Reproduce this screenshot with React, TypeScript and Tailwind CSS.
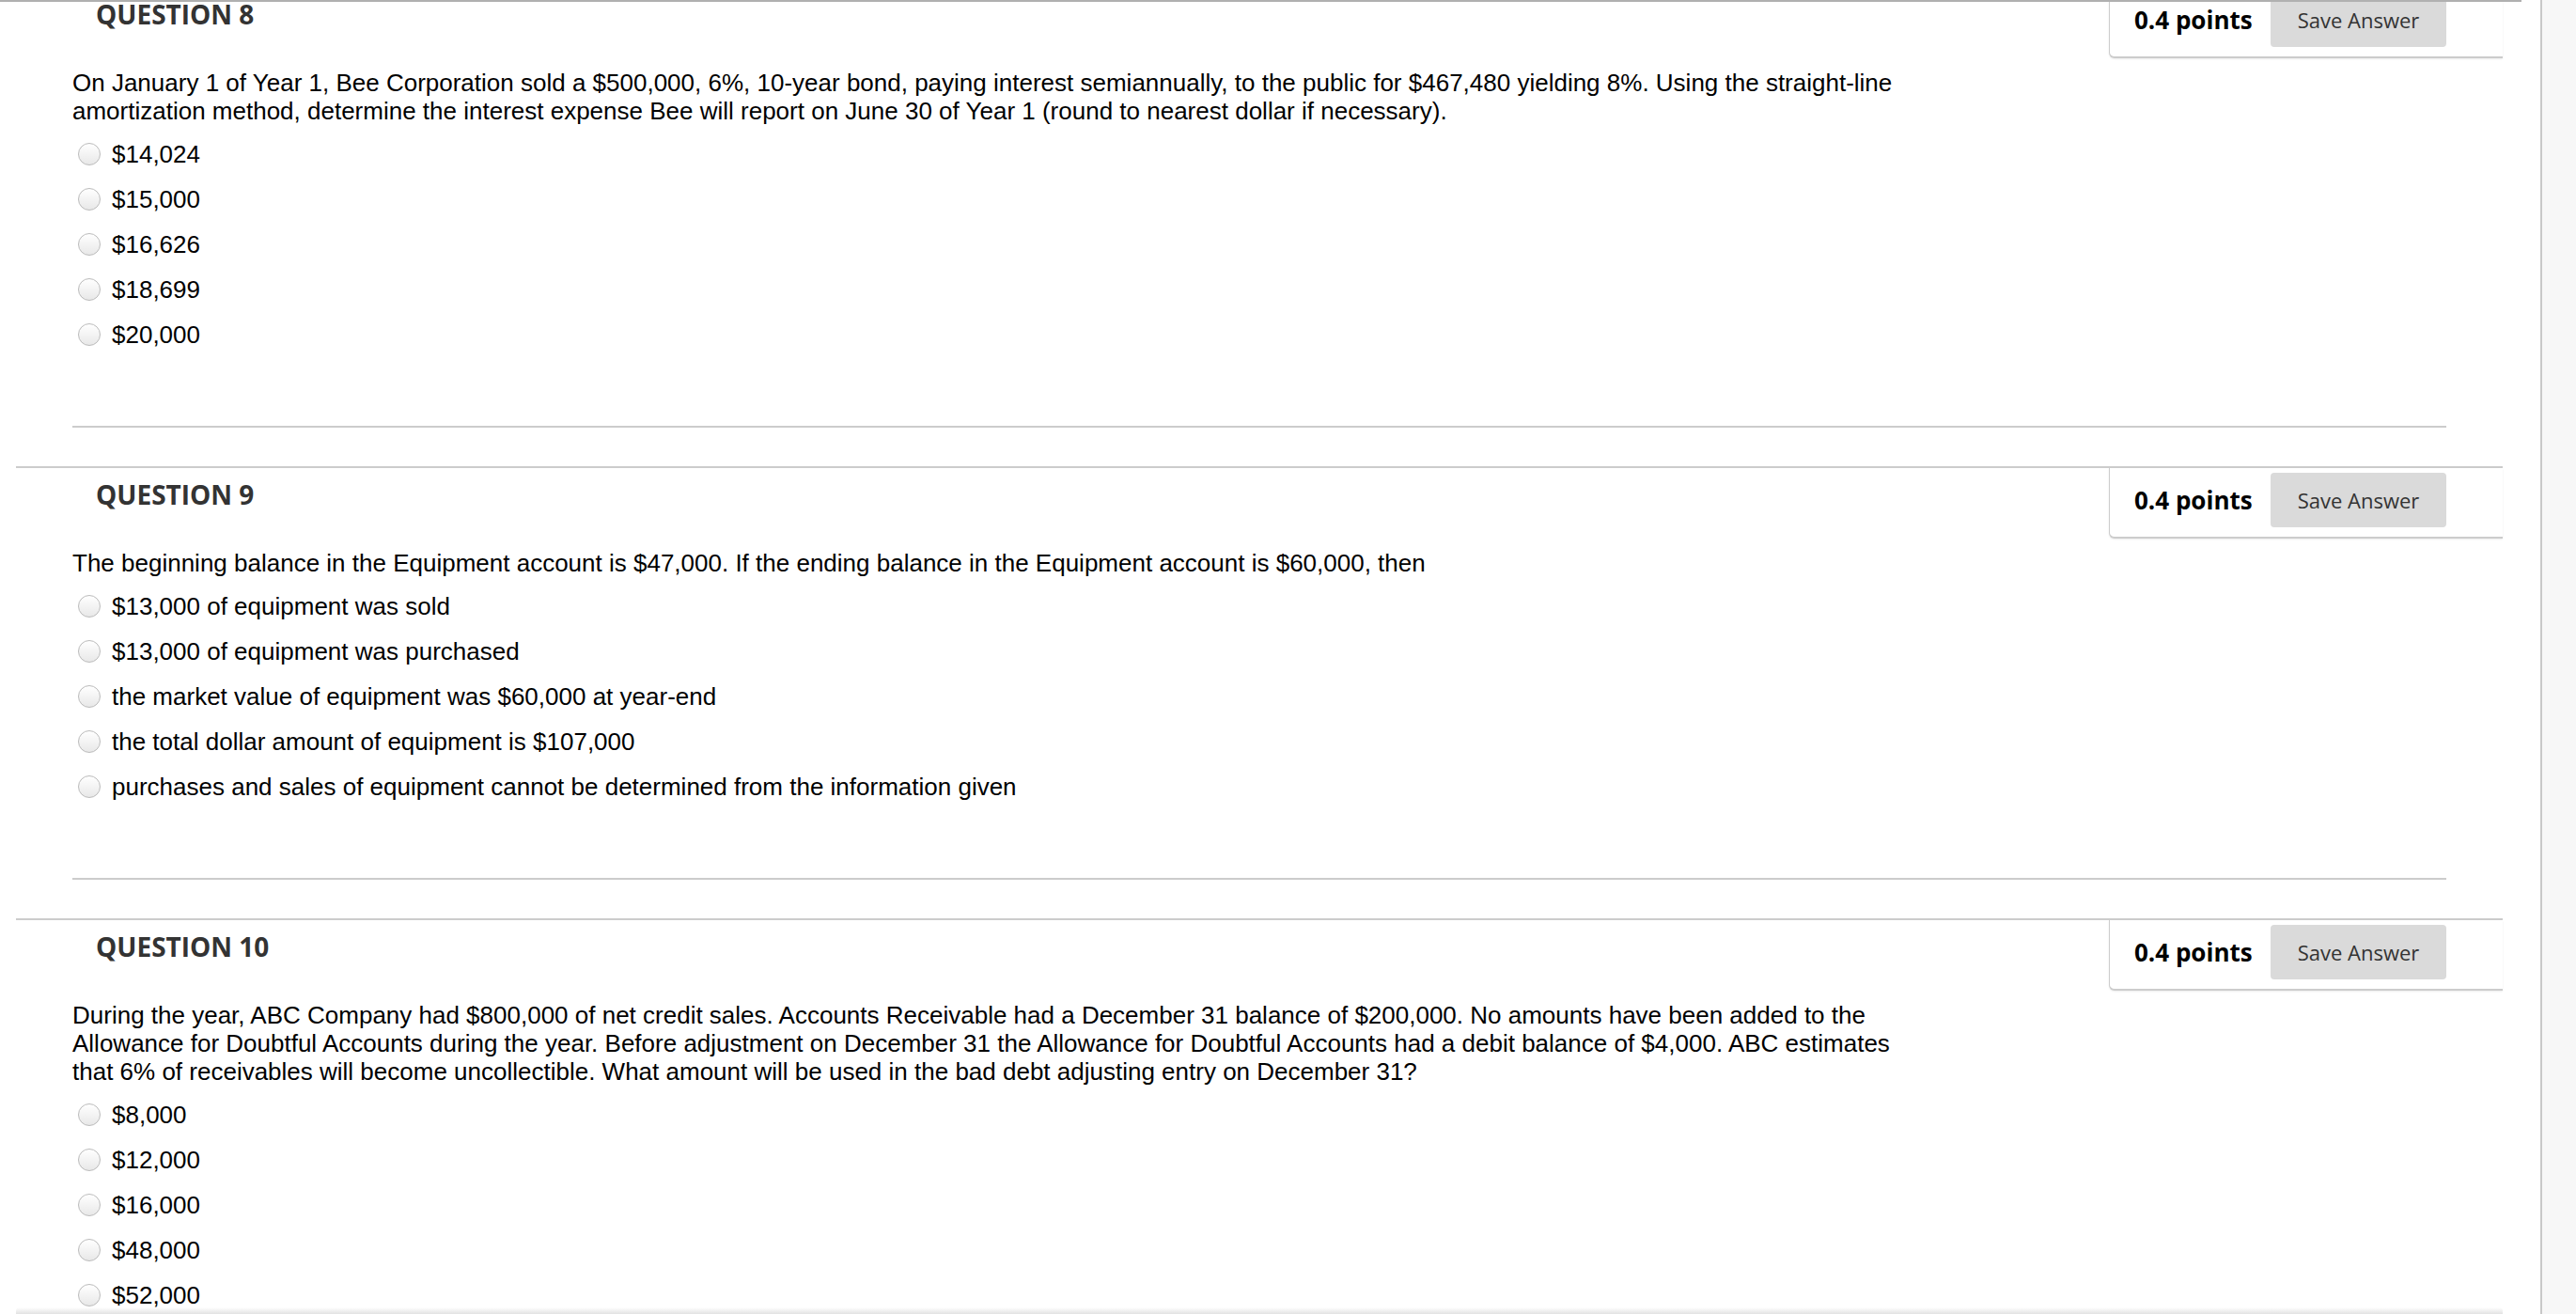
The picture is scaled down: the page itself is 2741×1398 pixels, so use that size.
import React from "react";

interface Question {
  number: number;
  text: string;
  options: string[];
}

const questions: Question[] = [
  {
    number: 8,
    text: "On January 1 of Year 1, Bee Corporation sold a $500,000, 6%, 10-year bond, paying interest semiannually, to the public for $467,480 yielding 8%. Using the straight-line amortization method, determine the interest expense Bee will report on June 30 of Year 1 (round to nearest dollar if necessary).",
    options: ["$14,024", "$15,000", "$16,626", "$18,699", "$20,000"],
  },
  {
    number: 9,
    text: "The beginning balance in the Equipment account is $47,000. If the ending balance in the Equipment account is $60,000, then",
    options: [
      "$13,000 of equipment was sold",
      "$13,000 of equipment was purchased",
      "the market value of equipment was $60,000 at year-end",
      "the total dollar amount of equipment is $107,000",
      "purchases and sales of equipment cannot be determined from the information given",
    ],
  },
  {
    number: 10,
    text: "During the year, ABC Company had $800,000 of net credit sales. Accounts Receivable had a December 31 balance of $200,000. No amounts have been added to the Allowance for Doubtful Accounts during the year. Before adjustment on December 31 the Allowance for Doubtful Accounts had a debit balance of $4,000. ABC estimates that 6% of receivables will become uncollectible. What amount will be used in the bad debt adjusting entry on December 31?",
    options: ["$8,000", "$12,000", "$16,000", "$48,000", "$52,000"],
  },
];

const openSans = "font-['Open_Sans',sans-serif]";
const arial = "font-['Liberation_Sans',Arial,sans-serif]";

function QuestionBlock({ q }: { q: Question }) {
  return (
    <section className="border-t-2 border-[#cccccc]">
      <div className="flex items-start justify-between">
        <h2 className={`${openSans} pl-[85px] pt-[10px] text-[28px] leading-[36px] font-bold text-[#333333]`}>
          QUESTION {q.number}
        </h2>
        <div className="flex h-[75px] w-[419px] items-start rounded-bl-[6px] border-b-2 border-l border-[#cccccc] bg-white pl-[26px] pt-[5px] shadow-[0_1px_2px_rgba(0,0,0,0.08)]">
          <span className={`${openSans} flex h-[58px] items-center text-[26px] font-bold text-black`}>
            0.4 points
          </span>
          <button
            type="button"
            className={`${openSans} ml-auto mr-[60px] h-[58px] w-[187px] rounded-[4px] bg-[#dadada] text-[22px] text-[#333333]`}
          >
            Save Answer
          </button>
        </div>
      </div>
      <div className="pl-[60px] pr-[60px]">
        <p className={`${arial} mt-[11px] w-[1963px] text-[26px] leading-[30px] text-black`}>{q.text}</p>
        <ul className="mt-[7px]">
          {q.options.map((o) => (
            <li key={o} className="flex h-[48px] items-center">
              <span className="ml-[6px] h-[24px] w-[24px] shrink-0 rounded-full border border-[#bbbbbb] bg-linear-to-b from-white to-[#e8e8e8]" />
              <span className={`${arial} ml-[12px] text-[26px] leading-[30px] text-black`}>{o}</span>
            </li>
          ))}
        </ul>
        <hr className="mb-[41px] mt-[73px] h-[2px] border-0 bg-[#cccccc]" />
      </div>
    </section>
  );
}

export default function App() {
  return (
    <div className="flex h-[1398px] w-full overflow-hidden bg-white">
      <main className="relative h-full w-[2705px] shrink-0 overflow-hidden border-r-2 border-[#c8c8c8] bg-white">
        <div className="-mt-[15px] pl-[17px] pr-[40px]">
          {questions.map((q) => (
            <QuestionBlock key={q.number} q={q} />
          ))}
        </div>
        <div className="absolute left-0 top-0 h-[2px] w-[2683px] bg-[#b0b0b0]" />
        <div className="absolute bottom-0 left-[17px] h-[7px] w-[2646px] rounded-t-[4px] bg-linear-to-b from-transparent to-[#e2e2e2]" />
      </main>
      <aside className="h-full flex-1 bg-[#f7f7f7]" />
    </div>
  );
}
